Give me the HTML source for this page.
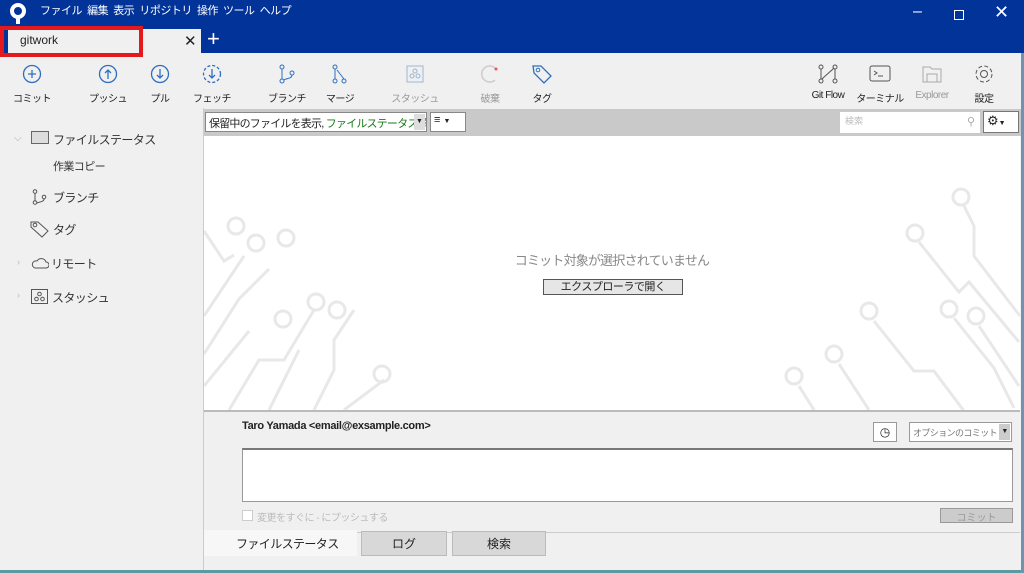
<!DOCTYPE html>
<html><head><meta charset="utf-8"><style>
*{margin:0;padding:0;box-sizing:border-box}
body{width:1024px;height:573px;overflow:hidden;background:#f0f0f0;font-family:"Liberation Sans","Noto Sans CJK JP",sans-serif;position:relative;color:#222}
.abs{position:absolute}
.menu{color:#fff;font-size:11px;top:2px;letter-spacing:-0.5px}
.tb{position:absolute;top:64px;text-align:center;font-size:10px;color:#222;width:60px;letter-spacing:-0.5px}
.tb svg{display:block;margin:0 auto 6px}
.side{font-size:12px;color:#333;letter-spacing:-0.6px}
</style></head><body>
<div class="abs" style="left:0;top:0;width:1024px;height:53px;background:#023399"></div>
<svg class="abs" style="left:8px;top:3px" width="20" height="22"><circle cx="10" cy="8" r="6" fill="none" stroke="#fff" stroke-width="4"/><rect x="8" y="12" width="4" height="9" fill="#fff"/></svg>
<div class="abs menu" style="left:40px">ファイル&nbsp; 編集&nbsp; 表示&nbsp; リポジトリ&nbsp; 操作&nbsp; ツール&nbsp; ヘルプ</div>
<div class="abs" style="left:913px;top:3px;color:#fff;font-size:16px">–</div>
<div class="abs" style="left:954px;top:10px;width:10px;height:10px;border:1.5px solid #fff"></div>
<div class="abs" style="left:994px;top:2px;color:#fff;font-size:18px">✕</div>
<div class="abs" style="left:8px;top:29px;width:193px;height:24px;background:#f0f0f0"></div>
<div class="abs" style="left:0;top:26px;width:143px;height:31px;border:4px solid #e3191d"></div>
<div class="abs" style="left:20px;top:33px;font-size:12px">gitwork</div>
<div class="abs" style="left:184px;top:32px;font-size:15px">✕</div>
<div class="abs" style="left:207px;top:28px;font-size:22px;color:#fff;line-height:22px">+</div>

<div class="tb" style="left:2px"><svg width="20" height="20"><circle cx="10" cy="10" r="8.5" fill="none" stroke="#2e6fc0" stroke-width="1.3"/><path d="M10 6v8M6 10h8" stroke="#2e6fc0" stroke-width="1.3"/></svg>コミット</div>
<div class="tb" style="left:78px"><svg width="20" height="20"><circle cx="10" cy="10" r="8.5" fill="none" stroke="#2e6fc0" stroke-width="1.3"/><path d="M10 15V6M7 9l3-3 3 3" stroke="#2e6fc0" fill="none" stroke-width="1.3"/></svg>プッシュ</div>
<div class="tb" style="left:130px"><svg width="20" height="20"><circle cx="10" cy="10" r="8.5" fill="none" stroke="#2e6fc0" stroke-width="1.3"/><path d="M10 5v9M7 11l3 3 3-3" stroke="#2e6fc0" fill="none" stroke-width="1.3"/></svg>プル</div>
<div class="tb" style="left:182px"><svg width="20" height="20"><circle cx="10" cy="10" r="8.5" fill="none" stroke="#2e6fc0" stroke-width="1.3" stroke-dasharray="3 2"/><path d="M10 5v9M7 11l3 3 3-3" stroke="#2e6fc0" fill="none" stroke-width="1.3"/></svg>フェッチ</div>
<div class="tb" style="left:257px"><svg width="20" height="20"><circle cx="5" cy="3" r="2" fill="none" stroke="#2e6fc0"/><circle cx="15" cy="9" r="2" fill="none" stroke="#2e6fc0"/><circle cx="5" cy="17" r="2" fill="none" stroke="#2e6fc0"/><path d="M5 5v10M15 11c0 4-6 3-8 5" stroke="#2e6fc0" fill="none"/></svg>ブランチ</div>
<div class="tb" style="left:310px"><svg width="20" height="20"><circle cx="5" cy="3" r="2" fill="none" stroke="#2e6fc0"/><circle cx="5" cy="17" r="2" fill="none" stroke="#2e6fc0"/><circle cx="14" cy="17" r="2" fill="none" stroke="#2e6fc0"/><path d="M5 5v10M7 6l7 9" stroke="#2e6fc0" fill="none"/></svg>マージ</div>
<div class="tb" style="left:385px;color:#999"><svg width="20" height="20"><rect x="2" y="2" width="16" height="16" fill="none" stroke="#9bb6d6"/><circle cx="10" cy="7" r="2" fill="none" stroke="#9bb6d6"/><circle cx="7" cy="12" r="2" fill="none" stroke="#9bb6d6"/><circle cx="13" cy="12" r="2" fill="none" stroke="#9bb6d6"/></svg>スタッシュ</div>
<div class="tb" style="left:460px;color:#999"><svg width="20" height="20"><path d="M15 4A8 8 0 1 0 15 16" stroke="#ccc" fill="none" stroke-width="1.5"/><circle cx="16" cy="5" r="1.5" fill="#e55"/></svg>破棄</div>
<div class="tb" style="left:512px"><svg width="22" height="20"><path d="M2 2h8l10 10-7 7L3 9z" fill="none" stroke="#2e6fc0" stroke-width="1.3"/><circle cx="7" cy="6" r="1.8" fill="none" stroke="#2e6fc0"/></svg>タグ</div>
<div class="tb" style="left:798px"><svg width="22" height="20"><circle cx="4" cy="3" r="2" fill="none" stroke="#555"/><circle cx="4" cy="17" r="2" fill="none" stroke="#555"/><circle cx="18" cy="3" r="2" fill="none" stroke="#555"/><circle cx="18" cy="17" r="2" fill="none" stroke="#555"/><path d="M4 5v10M18 5v10M5 15C10 10 12 9 17 4" stroke="#555" fill="none"/></svg>Git Flow</div>
<div class="tb" style="left:850px"><svg width="22" height="20"><rect x="1" y="2" width="20" height="15" rx="2" fill="none" stroke="#555"/><path d="M5 7l3 2-3 2M9 12h5" stroke="#555" fill="none"/></svg>ターミナル</div>
<div class="tb" style="left:902px;color:#999"><svg width="22" height="20"><path d="M2 3h7l2 2h9v13H2z" fill="none" stroke="#aaa"/><rect x="6" y="10" width="10" height="8" fill="none" stroke="#aaa"/></svg>Explorer</div>
<div class="tb" style="left:954px"><svg width="22" height="20"><circle cx="11" cy="10" r="3.5" fill="none" stroke="#555"/><circle cx="11" cy="10" r="8" fill="none" stroke="#555" stroke-dasharray="4 2.3"/></svg>設定</div>

<div class="abs" style="left:0;top:108px;width:204px;height:465px;background:#f0f0f0;border-right:1px solid #ccc"></div>
<div class="abs side" style="left:14px;top:133px;color:#aaa;font-size:10px">⌵</div>
<div class="abs" style="left:31px;top:131px;width:18px;height:13px;border:1px solid #666;background:#ddd"></div>
<div class="abs side" style="left:53px;top:131px">ファイルステータス</div>
<div class="abs side" style="left:53px;top:158px;font-size:11px">作業コピー</div>
<svg class="abs" style="left:32px;top:189px" width="16" height="16"><circle cx="3" cy="2.5" r="1.8" fill="none" stroke="#555"/><circle cx="3" cy="13.5" r="1.8" fill="none" stroke="#555"/><circle cx="12" cy="8" r="1.8" fill="none" stroke="#555"/><path d="M3 4v8M12 10c0 3-5 3-7 4" stroke="#555" fill="none"/></svg>
<div class="abs side" style="left:53px;top:189px">ブランチ</div>
<svg class="abs" style="left:30px;top:220px" width="20" height="18"><path d="M1 2h7l10 9-6 6L1 7z" fill="none" stroke="#555"/><circle cx="5" cy="5" r="1.8" fill="none" stroke="#555"/></svg>
<div class="abs side" style="left:53px;top:221px">タグ</div>
<div class="abs" style="left:17px;top:257px;color:#bbb;font-size:9px">›</div>
<svg class="abs" style="left:31px;top:256px" width="18" height="13"><path d="M4 12h11a3 3 0 0 0 0-6 5 5 0 0 0-9-1 3.5 3.5 0 0 0-2 7z" fill="none" stroke="#555"/></svg>
<div class="abs side" style="left:51px;top:255px">リモート</div>
<div class="abs" style="left:17px;top:290px;color:#bbb;font-size:9px">›</div>
<svg class="abs" style="left:31px;top:289px" width="17" height="15"><rect x="0.5" y="0.5" width="16" height="14" fill="none" stroke="#555"/><circle cx="8.5" cy="5" r="1.8" fill="none" stroke="#555"/><circle cx="5.5" cy="10" r="1.8" fill="none" stroke="#555"/><circle cx="11.5" cy="10" r="1.8" fill="none" stroke="#555"/></svg>
<div class="abs side" style="left:52px;top:289px">スタッシュ</div>

<div class="abs" style="left:204px;top:109px;width:820px;height:27px;background:#c9c9c9"></div>
<div class="abs" style="left:205px;top:112px;width:222px;height:20px;background:#fff;border:1px solid #888;font-size:11px;padding:2px 3px;white-space:nowrap;overflow:hidden;letter-spacing:-0.8px">保留中のファイルを表示, <span style="color:#197a19">ファイルステータス順</span></div>
<div class="abs" style="left:414px;top:114px;width:11px;height:16px;background:#ddd;font-size:7px;text-align:center;line-height:16px">▼</div>
<div class="abs" style="left:430px;top:112px;width:36px;height:20px;background:#fff;border:1px solid #888;font-size:11px;padding:1px 3px">≡ <span style="font-size:7px">▼</span></div>
<div class="abs" style="left:840px;top:112px;width:140px;height:21px;background:#fff;font-size:9px;color:#bbb;padding:2px 5px">検索<span style="position:absolute;right:5px;top:3px;color:#aaa;font-size:11px">⚲</span></div>
<div class="abs" style="left:983px;top:111px;width:36px;height:22px;background:#fff;border:1px solid #777;font-size:13px;padding:1px 3px">⚙<span style="font-size:7px">▼</span></div>

<div class="abs" style="left:204px;top:136px;width:816px;height:274px;background:#fff;overflow:hidden">
<svg width="816" height="274" fill="none" stroke="#e8e8e8" stroke-width="3">
<path d="M0 95l20 30 10-6"/><circle cx="32" cy="90" r="8"/>
<path d="M0 180l40-60"/><circle cx="52" cy="107" r="8"/>
<path d="M0 218l35-55l30-30"/><circle cx="82" cy="102" r="8"/>
<path d="M0 250l45-55"/>
<path d="M25 274l30-50 l25 0 l30-50"/><circle cx="79" cy="183" r="8"/>
<path d="M65 274l30-60"/><circle cx="112" cy="166" r="8"/>
<path d="M110 274l20-40 l0-30 l20-30"/><circle cx="133" cy="174" r="8"/>
<path d="M140 274l40-30"/><circle cx="178" cy="238" r="8"/>
<circle cx="757" cy="61" r="8"/><path d="M760 70l10 20 l0 30 l46 60"/>
<circle cx="711" cy="97" r="8"/><path d="M715 106l40 50 l10-10 l50 60"/>
<circle cx="665" cy="175" r="8"/><path d="M670 185l40 50 l20 0 l30 40"/>
<circle cx="745" cy="173" r="8"/><path d="M750 182l40 50 l20 40"/>
<circle cx="772" cy="180" r="8"/><path d="M775 190l40 60"/>
<circle cx="630" cy="218" r="8"/><path d="M635 228l30 46"/>
<circle cx="590" cy="240" r="8"/><path d="M595 250l15 24"/>
</svg>
</div>
<div class="abs" style="left:204px;top:250px;width:816px;text-align:center;font-size:13px;color:#888;letter-spacing:-0.8px">コミット対象が選択されていません</div>
<div class="abs" style="left:543px;top:279px;width:140px;height:16px;border:1px solid #555;background:#e6e6e6;font-size:11px;text-align:center;line-height:14px;letter-spacing:-0.5px">エクスプローラで開く</div>

<div class="abs" style="left:204px;top:410px;width:816px;height:2px;background:#bbb"></div>
<div class="abs" style="left:242px;top:420px;font-size:11px;font-weight:bold;color:#222;letter-spacing:-0.3px">Taro Yamada &lt;email@exsample.com&gt;</div>
<div class="abs" style="left:873px;top:422px;width:24px;height:20px;background:#fff;border:1px solid #999;font-size:12px;text-align:center;line-height:18px">◷</div>
<div class="abs" style="left:909px;top:422px;width:103px;height:20px;background:#fff;border:1px solid #999;font-size:9px;color:#777;padding:3px 3px;letter-spacing:-0.6px;white-space:nowrap;overflow:hidden">オプションのコミット<span style="position:absolute;right:1px;top:1px;width:11px;height:16px;background:#ccc;font-size:7px;color:#222;line-height:16px;text-align:center">▼</span></div>
<div class="abs" style="left:242px;top:448px;width:771px;height:54px;background:#fff;border:1px solid #999;border-top:2px solid #777"></div>
<div class="abs" style="left:242px;top:510px;width:11px;height:11px;background:#fff;border:1px solid #ccc"></div>
<div class="abs" style="left:257px;top:509px;font-size:10px;color:#bbb;letter-spacing:-0.5px">変更をすぐに - にプッシュする</div>
<div class="abs" style="left:940px;top:508px;width:73px;height:15px;background:#ccc;border:1px solid #999;font-size:10px;color:#999;text-align:center">コミット</div>
<div class="abs" style="left:204px;top:532px;width:816px;height:1px;background:#ccc"></div>
<div class="abs" style="left:204px;top:530px;width:153px;height:26px;background:#f7f7f7;font-size:12px;padding:5px 0 0 32px;letter-spacing:-0.6px">ファイルステータス</div>
<div class="abs" style="left:361px;top:531px;width:86px;height:25px;background:#d8d8d8;border:1px solid #bbb;font-size:12px;text-align:center;padding-top:3px">ログ</div>
<div class="abs" style="left:452px;top:531px;width:94px;height:25px;background:#d8d8d8;border:1px solid #bbb;font-size:12px;text-align:center;padding-top:3px">検索</div>
<div class="abs" style="left:0;top:570px;width:1024px;height:3px;background:#5a9aa0"></div>
<div class="abs" style="left:1021px;top:53px;width:3px;height:520px;background:#6f93b0"></div>
</body></html>
